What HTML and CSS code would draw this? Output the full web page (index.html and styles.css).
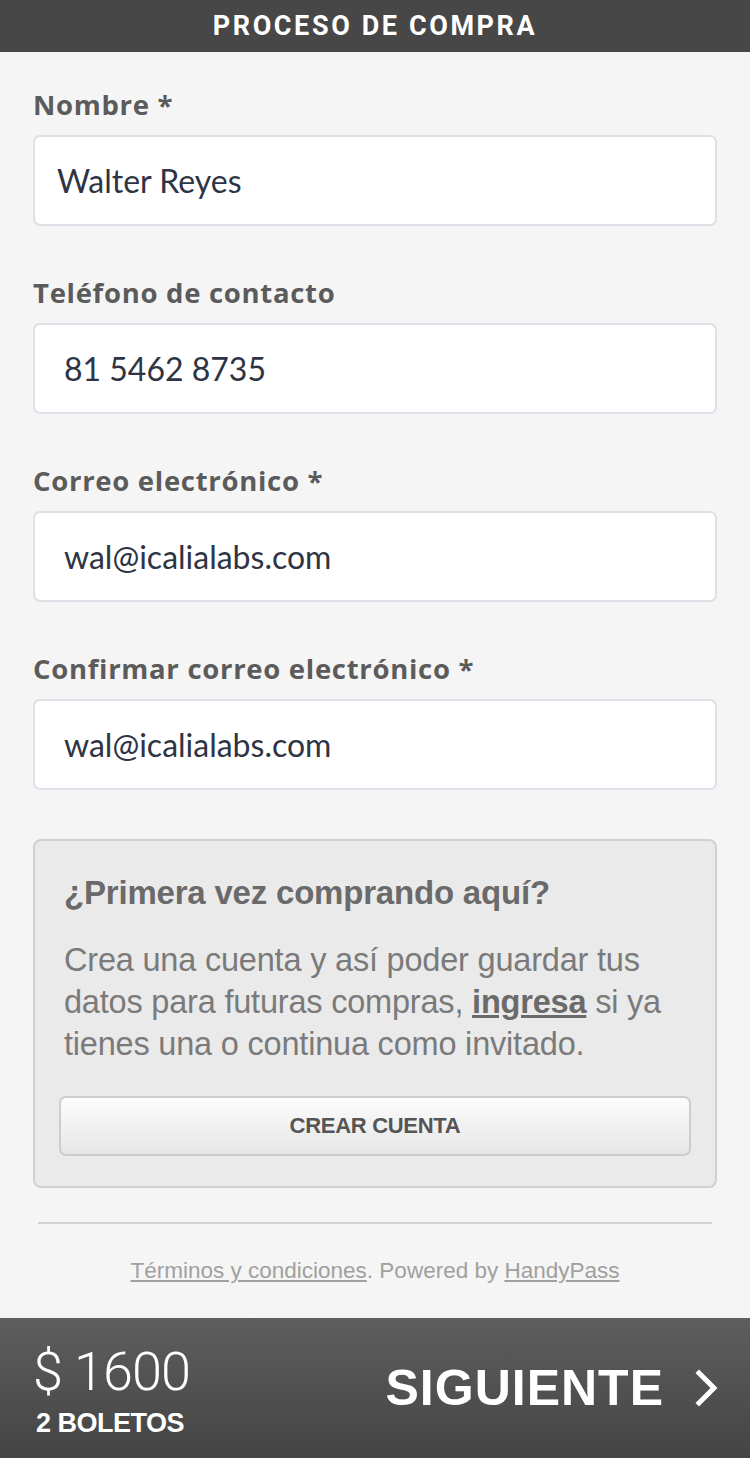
FILE: index.html
```html
<!DOCTYPE html>
<html lang="es">
<head>
<meta charset="utf-8">
<title>Proceso de compra</title>
<link rel="stylesheet" href="styles.css">
</head>
<body>
<div class="page">
  <header class="topbar">PROCESO DE COMPRA</header>
  <main class="content">
    <form class="form">
      <div class="field">
        <label class="label">Nombre *</label>
        <div class="input input-name">Walter Reyes</div>
      </div>
      <div class="field">
        <label class="label">Teléfono de contacto</label>
        <div class="input">81 5462 8735</div>
      </div>
      <div class="field">
        <label class="label">Correo electrónico *</label>
        <div class="input">wal@icalialabs.com</div>
      </div>
      <div class="field">
        <label class="label">Confirmar correo electrónico *</label>
        <div class="input">wal@icalialabs.com</div>
      </div>
    </form>
    <section class="infobox">
      <h2 class="info-title">¿Primera vez comprando aquí?</h2>
      <p class="info-text">Crea una cuenta y así poder guardar tus datos para futuras compras, <a class="info-link" href="#">ingresa</a> si ya tienes una o continua como invitado.</p>
      <button class="btn-create" type="button">CREAR CUENTA</button>
    </section>
    <hr class="divider">
    <p class="footer-text"><a href="#" class="footer-link">Términos y condiciones</a>. Powered by <a href="#" class="footer-link">HandyPass</a></p>
  </main>
  <footer class="bottombar">
    <div class="total">
      <div class="price">$ 1600</div>
      <div class="tickets">2 BOLETOS</div>
    </div>
    <a class="next" href="#">SIGUIENTE
      <svg class="chev" width="26" height="38" viewBox="0 0 26 38"><path d="M5 4 L20 19 L5 34" fill="none" stroke="#fff" stroke-width="5" stroke-linecap="square"/></svg>
    </a>
  </footer>
</div>
</body>
</html>
```

FILE: styles.css
```css
* { box-sizing: border-box; }
html, body { margin: 0; padding: 0; }
body {
  background: #f5f5f5;
  font-family: "Open Sans", "Liberation Sans", sans-serif;
}
.page {
  width: 750px;
  height: 1458px;
  display: flex;
  flex-direction: column;
}
.topbar {
  height: 52px;
  flex: none;
  background: #474747;
  color: #fff;
  font-family: "Roboto", "Liberation Sans", sans-serif;
  font-weight: 700;
  font-size: 27px;
  letter-spacing: 2.6px;
  display: flex;
  align-items: center;
  justify-content: center;
}
.content {
  flex: 1;
  padding: 36px 33px 0;
  display: flex;
  flex-direction: column;
}
.form {
  display: flex;
  flex-direction: column;
  gap: 50px;
}
.field {
  display: flex;
  flex-direction: column;
  gap: 13px;
}
.label {
  font-family: "Open Sans", "Liberation Sans", sans-serif;
  font-weight: 700;
  font-size: 27.5px;
  letter-spacing: 0.7px;
  line-height: 34px;
  color: #5b5b5b;
  height: 34px;
}
.input {
  height: 91px;
  background: #fff;
  border: 2px solid #dfdfe8;
  border-radius: 7px;
  display: flex;
  align-items: center;
  padding-left: 29px;
  font-family: "Lato", "Liberation Sans", sans-serif;
  font-size: 32px;
  color: #2e3444;
}
.input-name { padding-left: 22px; }
.infobox {
  margin-top: 49px;
  background: #eaeaea;
  border: 2px solid #d0d0d0;
  border-radius: 8px;
  padding: 30px 24px 30px 29px;
  height: 349px;
}
.info-title {
  margin: 0;
  font-family: "Liberation Sans", sans-serif;
  font-weight: 700;
  font-size: 33px;
  line-height: 44px;
  color: #6a6a6a;
  letter-spacing: -0.2px;
}
.info-text {
  margin: 24px 0 0;
  font-family: "Liberation Sans", sans-serif;
  font-size: 32.5px;
  line-height: 42px;
  color: #7a7a7a;
  letter-spacing: -0.2px;
}
.info-link {
  color: #6a6a6a;
  font-weight: 700;
  text-decoration: underline;
}
.btn-create {
  margin-top: 31px;
  margin-left: -5px;
  width: 632px;
  height: 60px;
  border: 2px solid #cdcdcd;
  border-radius: 7px;
  background: linear-gradient(#fcfcfc, #e6e6e6);
  font-family: "Liberation Sans", sans-serif;
  font-weight: 700;
  font-size: 22px;
  color: #555;
  letter-spacing: -0.3px;
  display: block;
}
.divider {
  margin: 34px 5px 0;
  border: 0;
  border-top: 2px solid #d3d3d3;
}
.footer-text {
  margin: 34px 0 0;
  text-align: center;
  font-family: "Liberation Sans", sans-serif;
  font-size: 22.5px;
  color: #a0a0a0;
}
.footer-link { color: #a0a0a0; text-decoration: underline; }
.bottombar {
  height: 140px;
  flex: none;
  background: linear-gradient(#5e5e5e, #444);
  display: flex;
  align-items: center;
  justify-content: space-between;
  padding: 0 30px 0 33px;
  color: #fff;
}
.total { display: flex; flex-direction: column; margin-top: 5px; }
.price {
  font-family: "Roboto", "Liberation Sans", sans-serif;
  font-size: 54px;
  font-weight: 300;
  line-height: 58px;
  letter-spacing: -1px;
}
.tickets {
  margin-top: 7px;
  font-family: "Liberation Sans", sans-serif;
  font-weight: 700;
  font-size: 27px;
  line-height: 30px;
  padding-left: 3px;
  letter-spacing: -0.5px;
}
.next {
  display: flex;
  align-items: center;
  gap: 30px;
  color: #fff;
  text-decoration: none;
  font-family: "Liberation Sans", sans-serif;
  font-weight: 700;
  font-size: 50px;
  letter-spacing: 1px;
}
.chev { display: block; }
```
